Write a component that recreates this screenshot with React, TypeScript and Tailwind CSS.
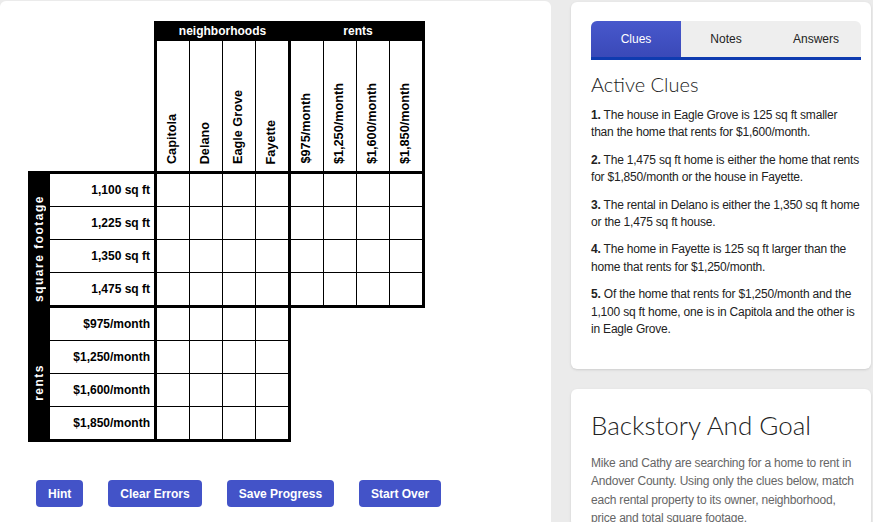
const hoods = ["Capitola", "Delano", "Eagle Grove", "Fayette"];
const rents = ["$975/month", "$1,250/month", "$1,600/month", "$1,850/month"];
const sizes = ["1,100 sq ft", "1,225 sq ft", "1,350 sq ft", "1,475 sq ft"];

const clues = [
  "The house in Eagle Grove is 125 sq ft smaller than the home that rents for $1,600/month.",
  "The 1,475 sq ft home is either the home that rents for $1,850/month or the house in Fayette.",
  "The rental in Delano is either the 1,350 sq ft home or the 1,475 sq ft house.",
  "The home in Fayette is 125 sq ft larger than the home that rents for $1,250/month.",
  "Of the home that rents for $1,250/month and the 1,100 sq ft home, one is in Capitola and the other is in Eagle Grove.",
];

const arial = "font-['Liberation_Sans',Arial,sans-serif]";
const thin = "font-['Lato','Inter',sans-serif] font-light";

const Cells = () => (
  <div className="grid grid-cols-[repeat(4,32px)] grid-rows-[repeat(4,32px)] gap-px bg-black">
    {Array.from({ length: 16 }).map((_, i) => (
      <div key={i} className="bg-white" />
    ))}
  </div>
);

const ColGroup = ({ labels }: { labels: string[] }) => (
  <div className="grid grid-cols-[repeat(4,32px)] gap-px bg-black">
    {labels.map((l) => (
      <div key={l} className="bg-white flex items-end justify-center pb-[7px]">
        <span className="[writing-mode:vertical-rl] rotate-180 text-[12.7px] font-bold text-black whitespace-nowrap">
          {l}
        </span>
      </div>
    ))}
  </div>
);

const Labels = ({ labels }: { labels: string[] }) => (
  <div className="w-[104px] grid grid-rows-[repeat(4,32px)] gap-px bg-black">
    {labels.map((l) => (
      <div key={l} className="bg-white flex items-center justify-end pr-[4px] text-[12px] font-bold text-black">
        {l}
      </div>
    ))}
  </div>
);

const SideBar = ({ label }: { label: string }) => (
  <div className="w-[22px] bg-black flex items-center justify-center pt-[18px]">
    <span className="[writing-mode:vertical-rl] rotate-180 text-[12px] font-bold text-white tracking-[1.5px] whitespace-nowrap">
      {label}
    </span>
  </div>
);

const Button = ({ children }: { children: string }) => (
  <button className="h-[27px] px-3 rounded-[4px] bg-[#4353c8] text-white text-[12px] font-bold">
    {children}
  </button>
);

export default function App() {
  return (
    <div className={`${arial} min-h-screen bg-[#ebebeb] flex gap-[20px] pt-px overflow-hidden`}>
      {/* puzzle grid */}
      <div className="w-[551px] shrink-0 bg-white rounded-t-md pt-[20px] h-[521px]">
        <div className="ml-[154px] w-[271px] h-[20px] bg-black flex text-white text-[12px] font-bold">
          <div className="w-[137px] flex items-center justify-center">neighborhoods</div>
          <div className="w-[134px] flex items-center justify-center">rents</div>
        </div>
        <div className="ml-[154px] w-[271px] h-[130px] flex border-x-[3px] border-black">
          <ColGroup labels={hoods} />
          <div className="w-[3px] bg-black" />
          <ColGroup labels={rents} />
        </div>
        <div className="ml-[28px] w-[397px] flex border-y-[3px] border-r-[3px] border-black">
          <SideBar label="square footage" />
          <Labels labels={sizes} />
          <div className="w-[3px] bg-black" />
          <Cells />
          <div className="w-[3px] bg-black" />
          <Cells />
        </div>
        <div className="ml-[28px] w-[263px] flex border-b-[3px] border-r-[3px] border-black">
          <SideBar label="rents" />
          <Labels labels={rents} />
          <div className="w-[3px] bg-black" />
          <Cells />
        </div>
        <div className="mt-[38px] ml-[36px] flex gap-[25px]">
          <Button>Hint</Button>
          <Button>Clear Errors</Button>
          <Button>Save Progress</Button>
          <Button>Start Over</Button>
        </div>
      </div>

      {/* side cards */}
      <div className="w-[300px] shrink-0 flex flex-col gap-[20px] pt-px">
        <div className="h-[367px] bg-white rounded-md shadow-sm pt-[19px] pl-[20px] pr-[10px]">
          <div className="flex h-[39px] bg-[#eeeeee] rounded-t-md border-b-[3px] border-[#0f3bb0] text-[12px] text-[#222]">
            <div className="w-[90px] flex items-center justify-center rounded-tl-md bg-gradient-to-b from-[#4858cc] to-[#3a49b8] text-white">
              Clues
            </div>
            <div className="w-[90px] flex items-center justify-center">Notes</div>
            <div className="w-[90px] flex items-center justify-center">Answers</div>
          </div>
          <h2 className={`${thin} mt-[11px] text-[20px] leading-[26px] text-[#222]`}>Active Clues</h2>
          <div className="mt-[10px] flex flex-col gap-[10px] text-[12px] leading-[17.4px] tracking-[-0.2px] text-[#222]">
            {clues.map((c, i) => (
              <p key={i}>
                <b>{i + 1}.</b> {c}
              </p>
            ))}
          </div>
        </div>
        <div className="flex-1 bg-white rounded-md shadow-sm pt-[20px] pl-[20px] pr-[10px]">
          <h2 className={`${thin} text-[26px] leading-[32px] text-[#222]`}>Backstory And Goal</h2>
          <p className="mt-[13px] text-[12px] leading-[18.3px] tracking-[-0.2px] text-[#666]">
            Mike and Cathy are searching for a home to rent in Andover County. Using only the clues below, match
            each rental property to its owner, neighborhood, price and total square footage.
          </p>
        </div>
      </div>
    </div>
  );
}
